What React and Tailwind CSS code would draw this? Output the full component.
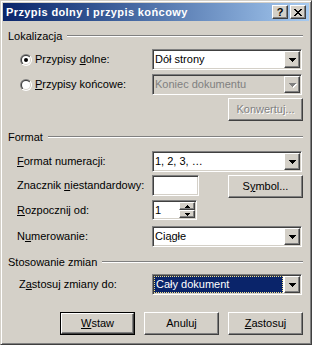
const raised = 'border border-t-white border-l-white border-r-[#404040] border-b-[#404040] shadow-[inset_-1px_-1px_#808080] bg-[#D4D0C8]'
const sunken = 'border border-t-[#808080] border-l-[#808080] border-r-white border-b-white shadow-[inset_1px_1px_#404040,inset_-1px_-1px_#D4D0C8]'

function DownArrow({ color = '#000' }) {
  return (
    <svg width="7" height="4" shapeRendering="crispEdges">
      <path d="M0 0h7v1H0zM1 1h5v1H1zM2 2h3v1H2zM3 3h1v1H3z" fill={color} />
    </svg>
  )
}

function SmallArrow({ up }) {
  return (
    <svg width="5" height="3" shapeRendering="crispEdges">
      <path d={up ? 'M0 2h5v1H0zM1 1h3v1H1zM2 0h1v1H2z' : 'M0 0h5v1H0zM1 1h3v1H1zM2 2h1v1H2z'} fill="#000" />
    </svg>
  )
}

function Combo({ value, disabled, selected }) {
  return (
    <div className={`${sunken} w-[150px] h-[21px] flex p-px ${disabled ? 'bg-[#D4D0C8]' : 'bg-white'}`}>
      <div className="flex-1 flex items-center pr-px">
        {selected ? (
          <div className="h-full w-full bg-[#0A246A] text-white border border-dotted border-[#F0E08A] flex items-center pl-px">
            {value}
          </div>
        ) : (
          <span className={`pl-px ${disabled ? 'text-[#808080]' : ''}`}>{value}</span>
        )}
      </div>
      <div className={`${raised} w-[16px] h-[17px] flex items-center justify-center`}>
        {disabled ? (
          <div className="relative w-[7px] h-[4px]">
            <div className="absolute left-px top-px"><DownArrow color="#fff" /></div>
            <div className="absolute left-0 top-0"><DownArrow color="#808080" /></div>
          </div>
        ) : (
          <DownArrow />
        )}
      </div>
    </div>
  )
}

function Button({ children, disabled, isDefault }) {
  const inner = (
    <div className={`${raised} w-full h-full flex items-center justify-center ${disabled ? 'text-[#808080] [text-shadow:1px_1px_#fff]' : ''}`}>
      <span>{children}</span>
    </div>
  )
  if (isDefault) {
    return <div className="w-[75px] h-[23px] border border-black">{inner}</div>
  }
  return <div className="w-[75px] h-[23px]">{inner}</div>
}

function Radio({ checked }) {
  return (
    <svg width="12" height="12" viewBox="0 0 12 12">
      <defs>
        <linearGradient id="rOuter" x1="0" y1="0" x2="1" y2="1">
          <stop offset="0.5" stopColor="#808080" />
          <stop offset="0.5" stopColor="#ffffff" />
        </linearGradient>
        <linearGradient id="rInner" x1="0" y1="0" x2="1" y2="1">
          <stop offset="0.5" stopColor="#404040" />
          <stop offset="0.5" stopColor="#D4D0C8" />
        </linearGradient>
      </defs>
      <circle cx="6" cy="6" r="6" fill="url(#rOuter)" />
      <circle cx="6" cy="6" r="5" fill="url(#rInner)" />
      <circle cx="6" cy="6" r="4" fill="#fff" />
      {checked && <circle cx="6" cy="6" r="2" fill="#000" />}
    </svg>
  )
}

function GroupHeader({ title, className = '' }) {
  return (
    <div className={`h-[16px] flex items-center gap-[5px] ${className}`}>
      <span>{title}</span>
      <div className="flex-1 h-[2px] border-t border-t-[#808080] border-b border-b-white" />
    </div>
  )
}

export default function App() {
  return (
    <div
      className="w-[312px] h-[345px] bg-[#D4D0C8] border border-t-[#D4D0C8] border-l-[#D4D0C8] border-r-[#404040] border-b-[#404040] shadow-[inset_1px_1px_white,inset_-1px_-1px_#808080] p-[2px] text-[11px] leading-[13px] text-black"
      style={{ fontFamily: '"Liberation Sans", Arial, sans-serif' }}
    >
      {/* Title bar */}
      <div className="h-[18px] flex items-center pl-[3px] pr-[3px] bg-linear-to-r from-[#0A246A] to-[#A6CAF0]">
        <span className="flex-1 text-white font-bold tracking-[0.4px]">Przypis dolny i przypis końcowy</span>
        <div className="flex gap-[2px]">
          <div className={`${raised} w-[16px] h-[14px] flex items-center justify-center font-bold text-[11px] leading-none`}>?</div>
          <div className={`${raised} w-[16px] h-[14px] flex items-center justify-center`}>
            <svg width="8" height="7" shapeRendering="crispEdges">
              <path d="M0 0h2v1H0zM6 0h2v1H6zM1 1h2v1H1zM5 1h2v1H5zM2 2h4v1H2zM3 3h2v1H3zM2 4h4v1H2zM1 5h2v1H1zM5 5h2v1H5zM0 6h2v1H0zM6 6h2v1H6z" fill="#000" />
            </svg>
          </div>
        </div>
      </div>

      {/* Body */}
      <div className="flex flex-col pt-[7px] pl-[5px] pr-[6px]">
        <GroupHeader title="Lokalizacja" />

        <div className="mt-[5px] flex items-center">
          <div className="w-[144px] pl-[12px] flex items-center gap-[3px]">
            <Radio checked />
            <span>Przypisy <u>d</u>olne:</span>
          </div>
          <Combo value="Dół strony" />
        </div>

        <div className="mt-[4px] flex items-center">
          <div className="w-[144px] pl-[12px] flex items-center gap-[3px]">
            <Radio />
            <span><u>P</u>rzypisy końcowe:</span>
          </div>
          <Combo value="Koniec dokumentu" disabled />
        </div>

        <div className="mt-[3px] flex justify-end">
          <Button disabled>Konwertuj...</Button>
        </div>

        <GroupHeader title="Format" className="mt-[8px]" />

        <div className="mt-[6px] flex items-center">
          <div className="w-[144px] pl-[9px]"><u>F</u>ormat numeracji:</div>
          <Combo value="1, 2, 3, …" />
        </div>

        <div className="mt-[3px] flex items-start">
          <div className="w-[144px] pl-[9px] h-[21px] flex items-center">
            <span>Znacznik <u>n</u>iestandardowy:</span>
          </div>
          <div className={`${sunken} w-[47px] h-[21px] bg-white`} />
          <div className="ml-auto">
            <Button>S<u>y</u>mbol...</Button>
          </div>
        </div>

        <div className="mt-[2px] flex items-center">
          <div className="w-[144px] pl-[9px]"><u>R</u>ozpocznij od:</div>
          <div className={`${sunken} w-[45px] h-[20px] bg-white flex p-px`}>
            <span className="flex-1 flex items-center pl-px">1</span>
            <div className="w-[16px] flex flex-col">
              <div className={`${raised} h-[8px] flex items-center justify-center`}><SmallArrow up /></div>
              <div className={`${raised} h-[8px] flex items-center justify-center`}><SmallArrow /></div>
            </div>
          </div>
        </div>

        <div className="mt-[6px] flex items-center">
          <div className="w-[144px] pl-[9px]">N<u>u</u>merowanie:</div>
          <Combo value="Ciągłe" />
        </div>

        <GroupHeader title="Stosowanie zmian" className="mt-[7px]" />

        <div className="mt-[4px] flex items-center">
          <div className="w-[144px] pl-[11px]">Z<u>a</u>stosuj zmiany do:</div>
          <Combo value="Cały dokument" selected />
        </div>

        <div className="mt-[17px] flex justify-end gap-[9px]">
          <Button isDefault><u>W</u>staw</Button>
          <Button>Anuluj</Button>
          <Button><u>Z</u>astosuj</Button>
        </div>
      </div>
    </div>
  )
}
